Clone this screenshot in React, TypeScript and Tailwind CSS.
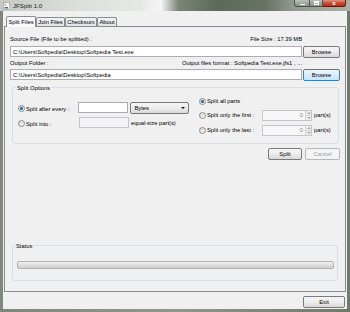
import React from "react";

const txt = "text-[5.8px] leading-[8px] text-black";

function Radio({ checked }: { checked?: boolean }) {
  return (
    <span className="flex h-[7px] w-[7px] shrink-0 items-center justify-center rounded-full border border-[#8b8b8b] bg-linear-to-br from-[#d4d4d4] to-[#fbfbfb]">
      {checked && <span className="h-[3px] w-[3px] rounded-full bg-[#1d5fb0]" />}
    </span>
  );
}

function Btn({
  children,
  className = "",
  disabled,
  focused,
}: {
  children: React.ReactNode;
  className?: string;
  disabled?: boolean;
  focused?: boolean;
}) {
  const skin = focused
    ? "border-[#3c7fb1] bg-linear-to-b from-[#eaf6fd] to-[#c4e5f8] text-black"
    : disabled
    ? "border-[#b5b9bc] bg-[#f4f4f4] text-[#a0a0a0]"
    : "border-[#7a7a7a] bg-linear-to-b from-[#f6f6f6] via-[#ececec] to-[#d9d9d9] text-black";
  return (
    <div
      className={`flex shrink-0 items-center justify-center rounded-[2px] border text-[5.8px] leading-[8px] ${skin} ${className}`}
    >
      {children}
    </div>
  );
}

function Field({
  children,
  className = "",
  disabled,
}: {
  children?: React.ReactNode;
  className?: string;
  disabled?: boolean;
}) {
  return (
    <div
      className={`flex h-[11px] shrink-0 items-center border px-[2px] text-[5.8px] leading-[8px] text-black ${
        disabled ? "border-[#c4c6c9] bg-[#f3f3f3]" : "border-[#abadb3] bg-white"
      } ${className}`}
    >
      {children}
    </div>
  );
}

function Spinner() {
  return (
    <div className="flex h-[11px] w-[50px] shrink-0 items-stretch border border-[#c4c6c9] bg-[#f7f7f7]">
      <div className="flex flex-1 items-center justify-end pr-[2px] text-[5.8px] leading-[8px] text-[#8a8a8a]">
        0
      </div>
      <div className="flex w-[6px] flex-col border-l border-[#d6d6d6]">
        <div className="flex flex-1 items-center justify-center border-b border-[#d6d6d6] bg-[#efefef]">
          <svg width="4" height="2" viewBox="0 0 4 2">
            <path d="M0 2 L2 0 L4 2 Z" fill="#a8a8a8" />
          </svg>
        </div>
        <div className="flex flex-1 items-center justify-center bg-[#efefef]">
          <svg width="4" height="2" viewBox="0 0 4 2">
            <path d="M0 0 L2 2 L4 0 Z" fill="#a8a8a8" />
          </svg>
        </div>
      </div>
    </div>
  );
}

function Tab({ label, w, active }: { label: string; w: string; active?: boolean }) {
  return (
    <div
      className={`flex shrink-0 items-center justify-center rounded-t-[2px] border border-b-0 border-[#898c95] text-[5.8px] leading-[8px] text-black ${w} ${
        active
          ? "relative z-10 -mb-[1px] h-[11px] bg-[#fafafa]"
          : "h-[9px] bg-linear-to-b from-[#f3f3f3] to-[#e3e3e3]"
      }`}
    >
      {label}
    </div>
  );
}

function JavaIcon() {
  return (
    <svg width="7" height="8" viewBox="0 0 7 8" className="shrink-0">
      <rect x="0.5" y="0.5" width="6" height="7" fill="#f4f4f4" stroke="#9a9a9a" strokeWidth="0.6" />
      <path d="M2 1.5 C3 2.5 2 3 3 4" stroke="#e2541f" strokeWidth="0.8" fill="none" />
      <path d="M1.5 5 H5 V6.5 H1.5 Z" fill="#3f6fb5" />
    </svg>
  );
}

export default function App() {
  return (
    <div
      className="flex h-[312px] w-[350px] flex-col overflow-hidden bg-[linear-gradient(90deg,#7d887a_0%,#8e978b_50%,#6f7a6c_100%)] font-['Liberation_Sans',Arial,sans-serif]"
    >
      {/* Title bar */}
      <div className="flex h-[11px] shrink-0 items-start bg-[linear-gradient(90deg,#c3c9c3_0%,#dadeda_20%,#e6e8e6_40%,#f6f6f6_46%,#7a8577_51%,#5d6a5a_62%,#687366_76%,#929b90_84%,#a9b0a7_100%)]">
        <div className="ml-[3px] mt-[2px]">
          <JavaIcon />
        </div>
        <div className="ml-[3px] mt-[1.5px] text-[6.2px] leading-[8px] text-[#1b1b1b]">JFSplit 1.0</div>
        <div className="flex-1" />
        <div className="mr-[4px] flex h-[7px]">
          <div className="flex w-[16px] items-end justify-center rounded-bl-[3px] border border-t-0 border-[#4d564b] bg-linear-to-b from-[#b9c0b8] to-[#8a9488] pb-[1.5px]">
            <span className="h-[1px] w-[5px] bg-white" />
          </div>
          <div className="flex w-[13px] items-center justify-center border border-l-0 border-t-0 border-[#4d564b] bg-linear-to-b from-[#b9c0b8] to-[#8a9488]">
            <span className="h-[4px] w-[5px] border border-t-2 border-white" />
          </div>
          <div className="flex w-[23px] items-center justify-center rounded-br-[3px] border border-l-0 border-t-0 border-[#5a2018] bg-linear-to-b from-[#e8927c] via-[#c94a33] to-[#b8301c] text-[6px] font-bold leading-[6px] text-white">
            x
          </div>
        </div>
      </div>

      {/* Body */}
      <div className="mx-[3px] mb-[3px] flex flex-1 flex-col bg-[#f0f0f0] pt-[5px]">
        {/* Tabs */}
        <div className="flex h-[10px] items-end pl-[3px]">
          <Tab label="Split Files" w="w-[30px]" active />
          <Tab label="Join Files" w="w-[29px]" />
          <Tab label="Checksum" w="w-[32px]" />
          <Tab label="About" w="w-[20px]" />
        </div>

        {/* Panel */}
        <div className="mx-[1px] flex h-[266px] flex-col border border-[#898c95] bg-[#f0f0f0] px-[5px] pt-[8px]">
          <div className={`flex h-[8px] justify-between pr-[38px] ${txt}`}>
            <span>Source File (File to be splitted) :</span>
            <span>File Size : 17.39 MB</span>
          </div>
          <div className="mt-[3px] flex h-[12px] items-start gap-[1px]">
            <Field className="flex-1">C:\Users\Softpedia\Desktop\Softpedia Test.exe</Field>
            <Btn className="h-[12px] w-[37px]">Browse</Btn>
          </div>

          <div className={`mt-[1px] flex h-[8px] justify-between pr-[38px] ${txt}`}>
            <span>Output Folder :</span>
            <span>Output files format : Softpedia Test.exe.jfs1 , ...</span>
          </div>
          <div className="mt-[2px] flex h-[12px] items-start gap-[1px]">
            <Field className="flex-1">C:\Users\Softpedia\Desktop\Softpedia</Field>
            <Btn className="h-[12px] w-[37px]" focused>
              Browse
            </Btn>
          </div>

          {/* Split options group */}
          <div className="relative ml-[2px] mr-[1px] mt-[6px] flex h-[57px] rounded-[3px] border border-[#d5dfe5]">
            <span className={`absolute -top-[4.5px] left-[3px] bg-[#f0f0f0] px-[1px] ${txt}`}>Split Options</span>

            {/* left column */}
            <div className="ml-[5px] mt-[14px] flex w-[171px] flex-col gap-[4px]">
              <div className="flex h-[11px] items-center">
                <div className={`flex w-[61px] items-center gap-[1px] pt-[2px] ${txt}`}>
                  <Radio checked />
                  <span>Split after every :</span>
                </div>
                <Field className="w-[50px]" />
                <div className="ml-[2px] flex h-[12px] w-[59px] items-center justify-between rounded-[2px] border border-[#7a7a7a] bg-linear-to-b from-[#f6f6f6] via-[#ececec] to-[#dadada] pl-[3px] pr-[3px] text-[5.8px] leading-[8px] text-black">
                  <span>Bytes</span>
                  <svg width="4" height="2" viewBox="0 0 4 2">
                    <path d="M0 0 L2 2 L4 0 Z" fill="#111" />
                  </svg>
                </div>
              </div>
              <div className="flex h-[11px] items-center">
                <div className={`flex w-[61px] items-center gap-[1px] pt-[2px] ${txt}`}>
                  <Radio />
                  <span>Split into :</span>
                </div>
                <Field className="w-[50px]" disabled />
                <span className={`ml-[2px] ${txt}`}>equal-size part(s)</span>
              </div>
            </div>

            {/* right column */}
            <div className="ml-[10px] mt-[8px] flex flex-col">
              <div className={`flex h-[10px] items-center gap-[1px] ${txt}`}>
                <Radio checked />
                <span>Split all parts</span>
              </div>
              <div className="mt-[4px] flex h-[10px] items-center">
                <div className={`flex w-[63px] items-center gap-[1px] ${txt}`}>
                  <Radio />
                  <span>Split only the first :</span>
                </div>
                <Spinner />
                <span className={`ml-[2px] ${txt}`}>part(s)</span>
              </div>
              <div className="mt-[5px] flex h-[10px] items-center">
                <div className={`flex w-[63px] items-center gap-[1px] ${txt}`}>
                  <Radio />
                  <span>Split only the last :</span>
                </div>
                <Spinner />
                <span className={`ml-[2px] ${txt}`}>part(s)</span>
              </div>
            </div>
          </div>

          {/* Split / Cancel */}
          <div className="mt-[4px] flex h-[12px] justify-end gap-[3px]">
            <Btn className="h-[12px] w-[34px]">Split</Btn>
            <Btn className="h-[12px] w-[35px]" disabled>
              Cancel
            </Btn>
          </div>

          {/* Status group */}
          <div className="relative mb-[10px] ml-[2px] mr-[2px] mt-auto flex h-[36px] flex-col rounded-[3px] border border-[#d5dfe5]">
            <span className={`absolute -top-[4.5px] left-[2px] bg-[#f0f0f0] px-[1px] ${txt}`}>Status</span>
            <div className="ml-[4px] mr-[3px] mt-[15px] h-[8px] rounded-[2px] border border-[#b2b2b2] bg-linear-to-b from-[#f3f3f3] via-[#dedede] to-[#d0d0d0]" />
          </div>
        </div>

        {/* Exit */}
        <div className="mr-[2px] mt-[4px] flex h-[12px] justify-end">
          <Btn className="h-[12px] w-[42px]">Exit</Btn>
        </div>
      </div>
    </div>
  );
}
